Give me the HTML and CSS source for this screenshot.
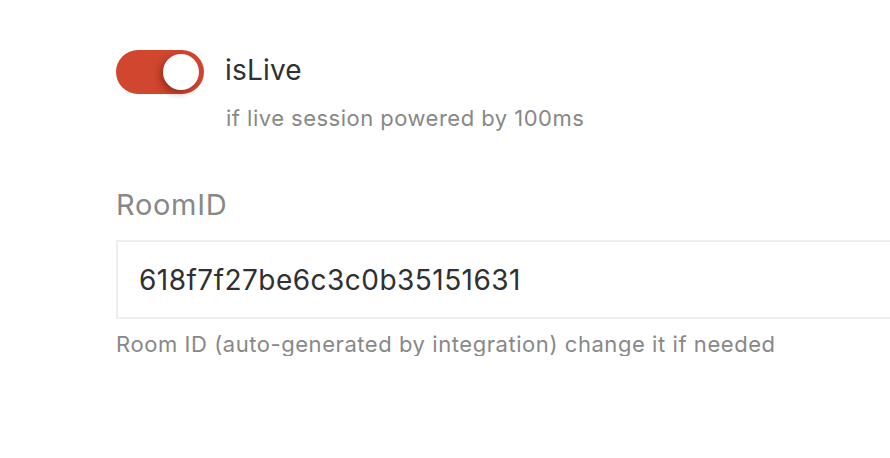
FILE: index.html
```html
<!DOCTYPE html>
<html>
<head>
<meta charset="utf-8">
<link rel="stylesheet" href="styles.css">
</head>
<body>
<div class="form">
  <div class="switch-field">
    <div class="switch-row">
      <span class="switch on"><span class="knob"></span></span>
      <span class="switch-label">isLive</span>
    </div>
    <div class="switch-help">if live session powered by 100ms</div>
  </div>
  <div class="field">
    <label class="field-label">RoomID</label>
    <div class="input">618f7f27be6c3c0b35151631</div>
    <div class="field-help">Room ID (auto-generated by integration) change it if needed</div>
  </div>
</div>
</body>
</html>
```
FILE: styles.css
```css
html, body {
  margin: 0;
  padding: 0;
  background: #fff;
}
body {
  font-family: Inter, "Noto Sans", sans-serif;
  overflow: hidden;
}
.form {
  padding: 50px 0 0 116px;
}
.switch-row {
  display: flex;
  align-items: center;
  gap: 21px;
  height: 44px;
}
.switch {
  width: 88px;
  height: 44px;
  border-radius: 22px;
  background: #d0462f;
  display: flex;
  align-items: center;
  justify-content: flex-end;
  padding: 0 5px;
  box-sizing: border-box;
  flex: none;
}
.knob {
  width: 36px;
  height: 36px;
  border-radius: 50%;
  background: #fff;
  box-shadow: -3px 3px 6px rgba(90, 20, 10, 0.45);
}
.switch-label {
  font-size: 28px;
  line-height: 32px;
  letter-spacing: 0.2px;
  color: #2f3033;
  margin-top: -4px;
}
.switch-help {
  margin: 12px 0 0 110px;
  font-size: 22px;
  line-height: 24px;
  letter-spacing: 0.48px;
  color: #888;
}
.field {
  margin-top: 60px;
}
.field-label {
  display: block;
  font-size: 29px;
  line-height: 30px;
  letter-spacing: 0.7px;
  color: #888;
}
.input {
  margin-top: 20px;
  height: 79px;
  box-sizing: border-box;
  border: 2px solid #eeeeee;
  border-right: none;
  display: flex;
  align-items: center;
  padding-left: 21px;
  font-size: 28px;
  letter-spacing: 0.47px;
  color: #2f3033;
}
.field-help {
  margin-top: 13px;
  font-size: 22px;
  line-height: 24px;
  letter-spacing: 0.56px;
  color: #888;
}
```
